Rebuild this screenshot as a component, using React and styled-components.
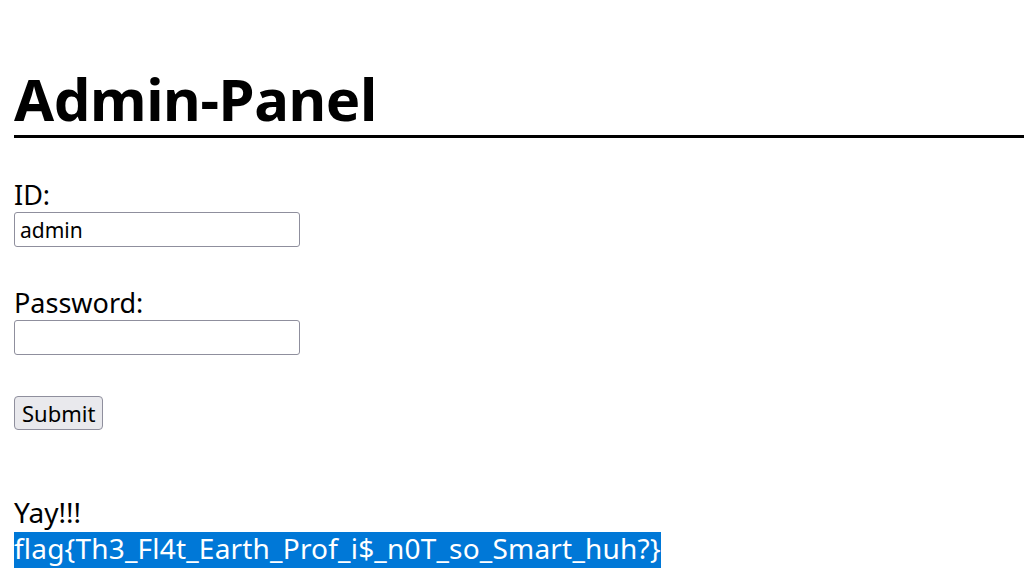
import React from 'react';
import styled, { createGlobalStyle } from 'styled-components';

const GlobalStyle = createGlobalStyle`
	body {
		margin: 0;
		background: #fff;
		color: #000;
		font-family: "Noto Sans", "Open Sans", sans-serif;
		overflow: hidden;
	}
`;

const Page = styled.div`
	padding: 65px 0 0 14px;
`;

const Title = styled.h1`
	margin: 0;
	font-size: 58px;
	font-weight: 700;
	line-height: 68px;
	letter-spacing: -0.4px;
	border-bottom: 3px solid #000;
	padding-bottom: 2px;
`;

const Form = styled.form`
	display: flex;
	flex-direction: column;
	align-items: flex-start;
	padding-top: 41px;
`;

const Label = styled.label`
	font-size: 27px;
	line-height: 32px;
	margin-top: ${props => (props.first ? '0' : '40px')};
`;

const Input = styled.input`
	box-sizing: border-box;
	width: 286px;
	height: 35px;
	margin: 1px 0 0;
	padding: 0 5px;
	border: 1px solid #8f8f9d;
	border-radius: 3px;
	font-family: "Noto Sans", sans-serif;
	font-size: 21px;
	color: #000;
	background: #fff;
	outline: none;
`;

const Button = styled.button`
	box-sizing: border-box;
	margin-top: 41px;
	height: 34px;
	padding: 0 7px;
	border: 1px solid #8f8f9d;
	border-radius: 4px;
	background: #e9e9ed;
	font-family: "Noto Sans", sans-serif;
	font-size: 22px;
	color: #000;
`;

const Result = styled.div`
	margin-top: 64px;
	font-size: 28px;
	line-height: 36px;
`;

const Flag = styled.span`
	display: inline-block;
	margin-top: 2px;
	padding-bottom: 4px;
	background: #0078d7;
	color: #fff;
	line-height: 32px;
	letter-spacing: 0.2px;
`;

export default function App() {
	return (
		<>
			<GlobalStyle />
			<Page>
				<Title>Admin-Panel</Title>
				<Form onSubmit={e => e.preventDefault()}>
					<Label first htmlFor="id">ID:</Label>
					<Input id="id" type="text" defaultValue="admin" />
					<Label htmlFor="pw">Password:</Label>
					<Input id="pw" type="password" />
					<Button type="submit">Submit</Button>
				</Form>
				<Result>
					Yay!!!
					<br />
					<Flag>flag{'{'}Th3_Fl4t_Earth_Prof_i$_n0T_so_Smart_huh?{'}'}</Flag>
				</Result>
			</Page>
		</>
	);
}
